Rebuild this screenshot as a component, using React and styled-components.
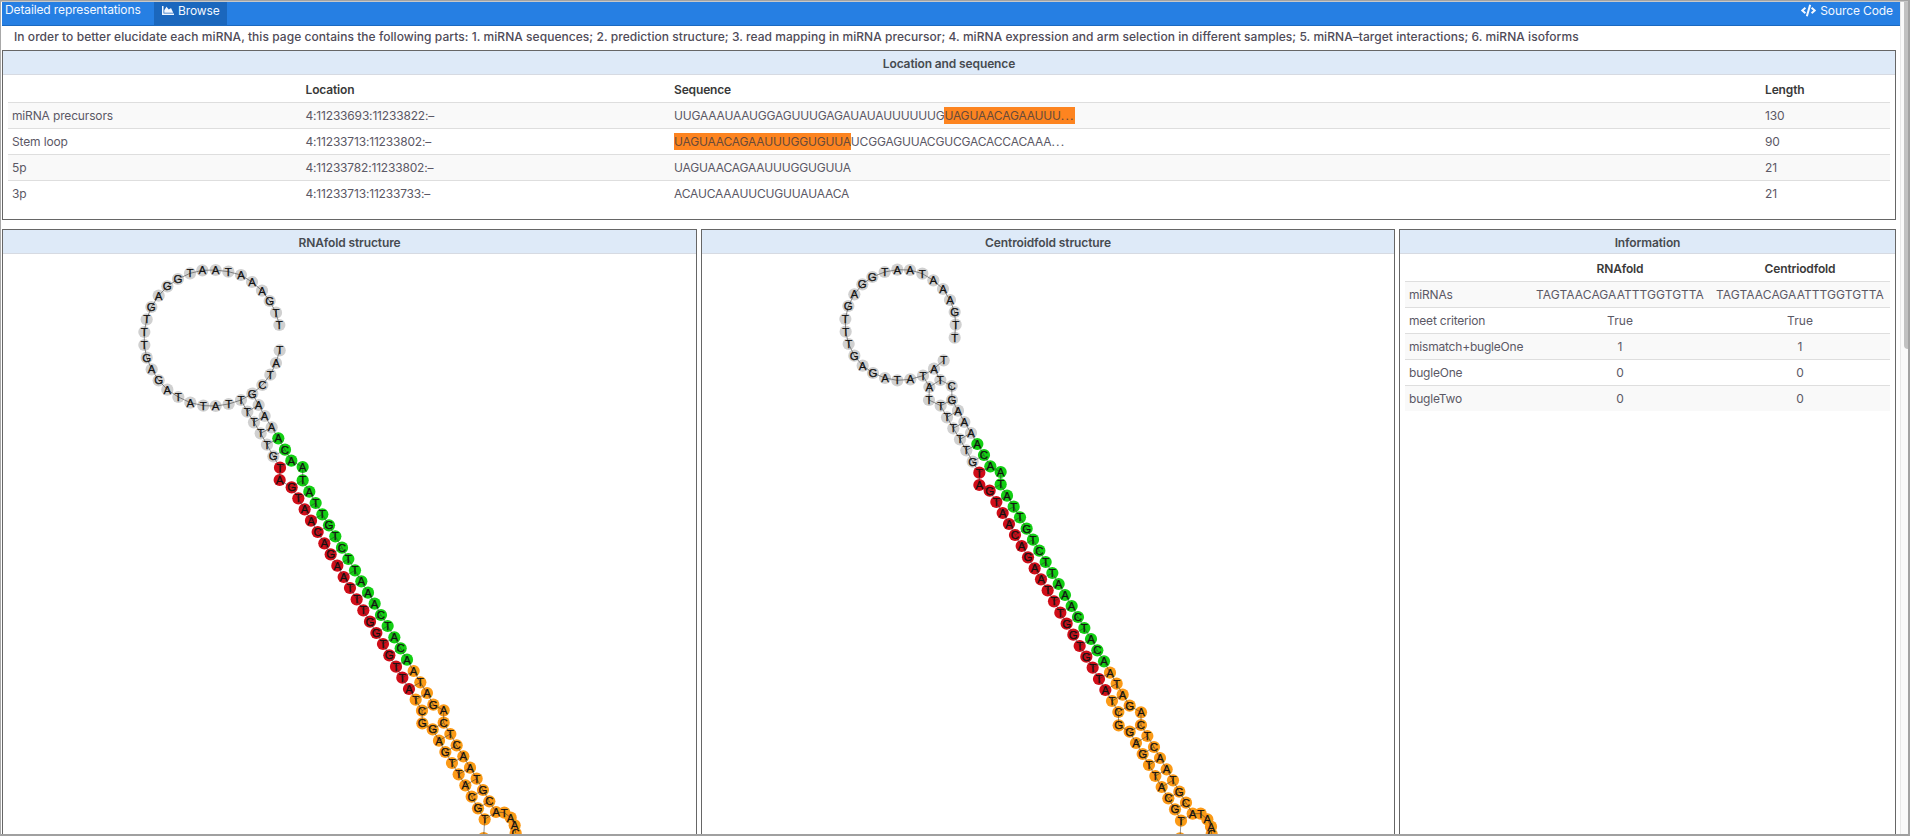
import React from "react";
import styled, { createGlobalStyle } from "styled-components";
import { FaChartArea, FaCode } from "react-icons/fa";

const GlobalStyle = createGlobalStyle`
  * { box-sizing: border-box; }
  body {
    margin: 0;
    overflow: hidden;
    background: #fff;
    color: #5b5865;
    font: 400 12px/18px Inter, "Liberation Sans", sans-serif;
  }
`;

const Frame = styled.div`
  display: flex;
  height: 836px;
  border: solid #a3a3a3;
  border-width: 1px 2px 2px 1px;
  border-left-color: #a8a8a8;
  border-bottom-color: #a0a0a0;
  box-shadow: inset 0 1px 0 #c8c8c8;
  overflow: hidden;
`;

const Content = styled.main`
  display: flex;
  flex-direction: column;
  width: 1899px;
  padding: 1px 0 0 1px;
`;

const ScrollTrack = styled.div`
  display: flex;
  justify-content: flex-end;
  flex: 1;
  margin-top: 1px;
  background: #fafafa;
  border-left: 1px solid #e8e8e8;
`;

const ScrollThumb = styled.div`
  width: 4px;
  height: 347px;
  background: #c1c1c1;
  border-radius: 0 0 0 4px;
`;

const TopBar = styled.header`
  display: flex;
  flex: none;
  height: 24px;
  background: #267fe3;
  border-bottom: 1px solid #1b69c0;
  color: #f3f8ff;
  letter-spacing: -0.12px;
`;

const BarTitle = styled.span`
  width: 152px;
  padding-left: 3px;
  line-height: 15px;
`;

const BarItem = styled.a`
  display: flex;
  gap: 4px;
  padding: 0 7px 0 8px;
  line-height: 17px;
  background: ${(p) => (p.$active ? "#1b67bd" : "transparent")};
  margin-left: ${(p) => (p.$right ? "auto" : "0")};
  letter-spacing: -0.1px;
  svg {
    width: ${(p) => p.$icon}px;
    height: 13px;
    margin-top: 2px;
  }
`;

const Intro = styled.p`
  flex: none;
  margin: 0;
  height: 24px;
  padding-left: 12px;
  line-height: 22px;
  font-weight: 500;
  letter-spacing: 0.05px;
  white-space: nowrap;
  color: #4f4b58;
`;

const Panel = styled.section`
  display: flex;
  flex-direction: column;
  width: ${(p) => p.$width}px;
  height: ${(p) => p.$height || "auto"};
  flex: none;
  border: 1px solid #666;
  border-bottom-width: ${(p) => (p.$open ? 0 : 1)}px;
  overflow: hidden;
`;

const PanelTitle = styled.h2`
  flex: none;
  margin: 0;
  height: 24px;
  background: #deeaf8;
  border-bottom: 1px solid #d6dae2;
  color: #474b50;
  font-size: 12px;
  font-weight: 600;
  line-height: 25px;
  letter-spacing: -0.12px;
  text-align: center;
`;

const PanelRow = styled.div`
  display: flex;
  gap: 4px;
  margin-top: 9px;
  flex: 1;
`;

const Table = styled.div`
  padding: 1px 5px 0;
`;

const Row = styled.div`
  display: grid;
  grid-template-columns: ${(p) => p.$columns};
  height: 26px;
  line-height: ${(p) => (p.$head ? 27 : 25)}px;
  border-top: ${(p) => (p.$head ? "0" : "1px solid #dedede")};
  background: ${(p) => (p.$striped ? "#f9f9f9" : "transparent")};
  color: ${(p) => (p.$head ? "#393939" : "inherit")};
  font-weight: ${(p) => (p.$head ? 600 : 400)};
`;

const Cell = styled.div`
  padding-left: ${(p) => (p.$center ? 0 : 4)}px;
  text-align: ${(p) => (p.$center ? "center" : "left")};
  letter-spacing: ${(p) => p.$tracking ?? -0.15}px;
  white-space: nowrap;
`;

const Mark = styled.mark`
  display: inline-block;
  height: 17px;
  line-height: 17px;
  background: #fd8420;
  color: #684a3a;
`;

const Dots = styled.span`
  letter-spacing: 1.2px;
`;

const Drawing = styled.svg`
  display: block;
  flex: none;
  width: 100%;
  height: 580px;
  text {
    font: 11.5px "Liberation Sans", Arial, sans-serif;
    text-anchor: middle;
    fill: #111;
    stroke: #111;
    stroke-width: 0.25px;
  }
`;

const LOCATION_COLUMNS = "293.5px 368.5px 1091px 1fr";
const INFO_COLUMNS = "125px 180px 1fr";

const locationRows = [
  ["miRNA precursors", "4:11233693:11233822:–", <>UUGAAAUAAUGGAGUUUGAGAUAUAUUUUUUG<Mark>UAGUAACAGAAUUU<Dots>...</Dots></Mark></>, "130"],
  ["Stem loop", "4:11233713:11233802:–", <><Mark>UAGUAACAGAAUUUGGUGUUA</Mark>UCGGAGUUACGUCGACACCACAAA<Dots>...</Dots></>, "90"],
  ["5p", "4:11233782:11233802:–", "UAGUAACAGAAUUUGGUGUUA", "21"],
  ["3p", "4:11233713:11233733:–", "ACAUCAAAUUCUGUUAUAACA", "21"],
];

const infoRows = [
  ["miRNAs", "TAGTAACAGAATTTGGTGTTA", "TAGTAACAGAATTTGGTGTTA"],
  ["meet criterion", "True", "True"],
  ["mismatch+bugleOne", "1", "1"],
  ["bugleOne", "0", "0"],
  ["bugleTwo", "0", "0"],
];

const FIVE = "TTGAAATAATGGAGTTTGAGATATATTTTTTGTAGTAACAGAATTTGGTGTTATCGGAGTTACGTC";
const THREE = "TATCGAAAACAATATTGTCTTAAACTACAATAGACTCAATGCATAAC";

// Positions are stored in thirds of a unit, relative to an offset per segment.
const place = (ox, oy, pts) => pts.map(([x, y]) => [ox + x / 3, oy + y / 3]);

const rnafold = {
  viewBox: "3 254 693 580",
  five: [
    ...place(130, 250, [[448,225],[438,188],[419,153],[396,122],[366,96],[333,75],[295,65],[257,60],[217,61],[180,70],[144,87],[112,109],[86,137],[64,171],[50,208],[43,246],[43,285],[50,323],[65,358],[86,391],[112,419],[145,441],[181,458],[220,467],[257,468],[296,462]]),
    ...place(230, 380, [[33,60],[52,95],[72,127],[92,160],[111,194],[130,229],[150,263],[149,300],[185,322],[205,355],[224,388],[243,422],[263,456]]),
    ...place(300, 520, [[73,70],[92,103],[112,137],[131,171],[150,204],[170,238],[190,271],[210,305],[229,339],[249,372],[268,406],[288,440],[307,473]]),
    ...place(400, 676, [[27,39],[47,71],[66,104],[67,142],[98,160],[117,194],[136,228],[156,261],[176,295],[196,328],[215,362],[234,397],[254,430],[251,486]]),
  ],
  three: [
    ...place(130, 250, [[449,301],[438,339],[421,374],[397,405],[367,431],[386,465],[404,498]]),
    ...place(230, 380, [[125,142],[145,175],[165,209],[184,242],[218,261],[218,301],[238,335],[257,369],[277,403]]),
    ...place(300, 520, [[87,16],[106,49],[126,83],[145,117],[165,151],[184,184],[204,218],[224,251],[243,285],[263,318],[283,352],[302,385],[321,419],[341,453]]),
    ...place(400, 676, [[61,19],[81,51],[100,86],[131,103],[131,140],[151,174],[170,208],[190,241],[210,275],[230,308],[249,342],[268,376],[288,408],[313,410],[332,425],[344,448],[347,471]]),
  ],
};

const centroidfold = {
  viewBox: "702 254 692 580",
  five: [
    ...place(830, 250, [[374,263],[377,224],[374,186],[360,150],[339,117],[310,91],[277,71],[240,60],[202,59],[164,66],[127,81],[97,103],[73,133],[55,168],[46,207],[47,245],[56,282],[73,317],[98,347],[129,369],[165,384],[202,391],[241,388],[279,377],[298,411],[297,450],[332,467]]),
    ...place(920, 370, [[81,142],[100,175],[120,208],[139,241],[158,275],[178,308],[178,345],[209,362],[229,396],[248,429],[267,462]]),
    ...place(1010, 530, [[15,15],[35,48],[54,82],[74,115],[93,148],[113,181],[132,214],[151,248],[170,281],[190,314],[209,348],[229,380],[248,413],[267,447]]),
    ...place(1090, 676, [[46,42],[66,75],[85,108],[86,148],[119,167],[138,201],[158,234],[177,267],[196,300],[215,333],[235,367],[255,400],[273,434],[270,487]]),
  ],
  three: [
    ...place(830, 250, [[341,331],[312,356],[331,390],[365,408],[366,450],[384,482]]),
    ...place(920, 370, [[133,156],[153,189],[172,222],[192,255],[211,289],[242,306],[242,343],[261,377],[281,410],[300,442],[320,476]]),
    ...place(1010, 530, [[69,29],[88,62],[107,96],[127,129],[146,162],[165,195],[185,228],[204,261],[223,294],[243,327],[262,361],[282,394],[300,428]]),
    ...place(1090, 676, [[80,23],[98,56],[119,89],[153,109],[153,147],[172,180],[192,213],[210,246],[230,280],[249,313],[268,347],[288,380],[308,413],[332,413],[352,430],[363,452],[365,474]]),
  ],
};

const GREY = "#d0d0d0";
const RED = "#d00d18";
const GREEN = "#13cf13";
const ORANGE = "#fb9a17";
const fiveColor = (i) => (i < 32 ? GREY : i < 53 ? RED : ORANGE);
const threeColor = (i) => (i < 8 ? GREY : i < 29 ? GREEN : ORANGE);
const UNPAIRED = [33, 55];

function Structure({ data, firstPair, bulge }) {
  const { five, three, viewBox } = data;
  const pairs = [];
  for (let i = firstPair; i <= 64; i++) {
    if (!UNPAIRED.includes(i) && i !== bulge) pairs.push([five[i], three[i - 22]]);
  }
  const nodes = [
    ...five.map((p, i) => ({ p, letter: FIVE[i], fill: fiveColor(i) })),
    ...three.map((p, i) => ({ p, letter: THREE[i], fill: threeColor(i) })),
  ];
  return (
    <Drawing viewBox={viewBox} preserveAspectRatio="xMinYMin slice">
      {nodes.map(({ p, fill }, i) => (
        <circle key={i} cx={p[0]} cy={p[1]} r="6.1" fill={fill} />
      ))}
      <g stroke="#333" strokeWidth="0.7" fill="none" opacity="0.75">
        <polyline points={five.join(" ")} />
        <polyline points={three.join(" ")} />
        {pairs.map(([a, b], i) => (
          <line key={i} x1={a[0]} y1={a[1]} x2={b[0]} y2={b[1]} />
        ))}
      </g>
      {nodes.map(({ p, letter }, i) => (
        <text key={i} x={p[0]} y={p[1] + 4}>{letter}</text>
      ))}
    </Drawing>
  );
}

export default function App() {
  return (
    <>
      <GlobalStyle />
      <Frame>
        <Content>
          <TopBar>
            <BarTitle>Detailed representations</BarTitle>
            <BarItem $active $icon={12}><FaChartArea />Browse</BarItem>
            <BarItem $right $icon={15}><FaCode />Source Code</BarItem>
          </TopBar>
          <Intro>
            In order to better elucidate each miRNA, this page contains the following parts: 1. miRNA sequences; 2. prediction structure; 3. read mapping in miRNA precursor; 4. miRNA expression and arm selection in different samples; 5. miRNA–target interactions; 6. miRNA isoforms
          </Intro>
          <Panel $width={1894} $height="170px">
            <PanelTitle>Location and sequence</PanelTitle>
            <Table>
              <Row $head $columns={LOCATION_COLUMNS}>
                <Cell />
                <Cell>Location</Cell>
                <Cell>Sequence</Cell>
                <Cell>Length</Cell>
              </Row>
              {locationRows.map(([name, location, sequence, length], i) => (
                <Row key={name} $columns={LOCATION_COLUMNS} $striped={i % 2 === 0}>
                  <Cell>{name}</Cell>
                  <Cell $tracking={-0.18}>{location}</Cell>
                  <Cell $tracking={-0.18}>{sequence}</Cell>
                  <Cell>{length}</Cell>
                </Row>
              ))}
            </Table>
          </Panel>
          <PanelRow>
            <Panel $width={695} $open>
              <PanelTitle>RNAfold structure</PanelTitle>
              <Structure data={rnafold} firstPair={26} />
            </Panel>
            <Panel $width={694} $open>
              <PanelTitle>Centroidfold structure</PanelTitle>
              <Structure data={centroidfold} firstPair={23} bulge={25} />
            </Panel>
            <Panel $width={497} $open>
              <PanelTitle>Information</PanelTitle>
              <Table>
                <Row $head $columns={INFO_COLUMNS}>
                  <Cell />
                  <Cell $center>RNAfold</Cell>
                  <Cell $center>Centriodfold</Cell>
                </Row>
                {infoRows.map(([name, a, b], i) => (
                  <Row key={name} $columns={INFO_COLUMNS} $striped={i % 2 === 0}>
                    <Cell $tracking={-0.2}>{name}</Cell>
                    <Cell $center $tracking={0.08}>{a}</Cell>
                    <Cell $center $tracking={0.08}>{b}</Cell>
                  </Row>
                ))}
              </Table>
            </Panel>
          </PanelRow>
        </Content>
        <ScrollTrack><ScrollThumb /></ScrollTrack>
      </Frame>
    </>
  );
}
